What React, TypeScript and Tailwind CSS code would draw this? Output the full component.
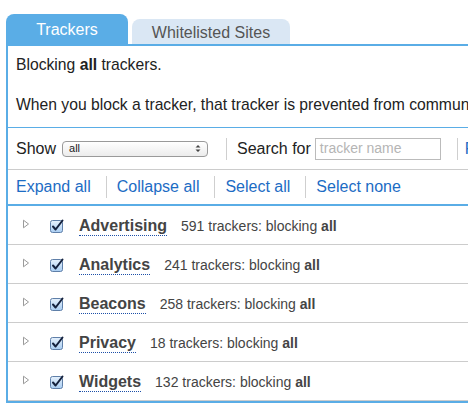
import { ReactNode } from "react";

const CATEGORIES = [
  { name: "Advertising", count: 591 },
  { name: "Analytics", count: 241 },
  { name: "Beacons", count: 258 },
  { name: "Privacy", count: 18 },
  { name: "Widgets", count: 132 },
];

function Triangle() {
  return (
    <svg width="8" height="10" viewBox="0 0 8 10" className="shrink-0">
      <path d="M1.5 1.2 L6.5 5 L1.5 8.8 Z" fill="none" stroke="#9a9a9a" strokeWidth="1" />
    </svg>
  );
}

function Checkbox() {
  return (
    <svg width="14" height="14" viewBox="0 0 14 14" className="shrink-0">
      <defs>
        <linearGradient id="cb" x1="0" y1="0" x2="0" y2="1">
          <stop offset="0" stopColor="#e6f1fc" />
          <stop offset="1" stopColor="#a9cdf2" />
        </linearGradient>
      </defs>
      <rect x="0.5" y="1.5" width="12" height="12" rx="2" fill="url(#cb)" stroke="#5f7fa8" />
      <path d="M3 7.5 L5.6 10.5 L12.5 1.5" fill="none" stroke="#14213d" strokeWidth="2" strokeLinecap="round" strokeLinejoin="round" />
    </svg>
  );
}

function Divider({ className = "" }: { className?: string }) {
  return <span className={`h-[22px] w-px bg-[#cfcfcf] ${className}`} />;
}

function Link({ children }: { children: ReactNode }) {
  return <span className="text-[#1c6cc4]">{children}</span>;
}

export default function App() {
  return (
    <div className="h-[416px] w-[468px] overflow-hidden bg-white font-['Liberation_Sans',Arial,sans-serif] text-[#222]">
      <div className="w-[640px] pl-[6px] pt-[14px]">
        <div className="flex h-[30px] items-end gap-[4px]">
          <div className="flex h-[30px] w-[122px] items-center justify-center rounded-t-[8px] bg-[#5aade6] pt-[2px] text-[16px] text-white">
            Trackers
          </div>
          <div className="flex h-[25px] w-[158px] items-center justify-center rounded-t-[8px] bg-[#dae7f4] pt-[2px] text-[16px] text-[#555]">
            Whitelisted Sites
          </div>
        </div>

        <div className="border-x-2 border-b-2 border-t-2 border-[#5aade6]">
          <div className="border-b border-[#5aade6] px-[8px] pb-[12px] pt-[9px] text-[15.7px] leading-[20px]">
            <p>
              Blocking <b>all</b> trackers.
            </p>
            <p className="mt-[20px] whitespace-nowrap">
              When you block a tracker, that tracker is prevented from communicating with your browser.
            </p>
          </div>

          <div className="flex h-[42px] items-center border-b border-[#cccccc] px-[8px] text-[16px]">
            <span>Show</span>
            <div className="ml-[6px] flex h-[16px] w-[146px] items-center justify-between rounded-[4px] border border-[#9a9a9a] bg-gradient-to-b from-white to-[#ececec] pl-[6px] pr-[6px] text-[11px] leading-none">
              <span>all</span>
              <svg width="6" height="9" viewBox="0 0 6 9">
                <path d="M0.5 3.5 L3 1 L5.5 3.5 Z M0.5 5.5 L3 8 L5.5 5.5 Z" fill="#444" />
              </svg>
            </div>
            <Divider className="ml-[18px] mr-[10px]" />
            <span>Search for</span>
            <div className="ml-[4px] flex h-[22px] w-[126px] items-center border border-[#bbbbbb] px-[4px] text-[14px] text-[#b5b5b5]">
              tracker name
            </div>
            <Divider className="ml-[16px] mr-[7px]" />
            <Link>Reset</Link>
          </div>

          <div className="flex h-[36px] items-center border-b-2 border-[#5aade6] px-[8px] text-[16px]">
            <Link>Expand all</Link>
            <Divider className="ml-[15px] mr-[10px]" />
            <Link>Collapse all</Link>
            <Divider className="ml-[15px] mr-[10px]" />
            <Link>Select all</Link>
            <Divider className="ml-[15px] mr-[10px]" />
            <Link>Select none</Link>
          </div>

          {CATEGORIES.map((c) => (
            <div key={c.name} className="flex h-[39px] items-center border-b border-[#cccccc] pl-[14px] pt-[2px]">
              <div className="-mt-[5px] w-[28px]">
                <Triangle />
              </div>
              <div className="w-[29px]">
                <Checkbox />
              </div>
              <span className="border-b border-dotted border-[#1c4fa8] text-[16px] font-bold leading-[18px] text-[#444]">
                {c.name}
              </span>
              <span className="ml-[14px] text-[14px] text-[#444]">
                {c.count} trackers: blocking <b>all</b>
              </span>
            </div>
          ))}
        </div>
      </div>
    </div>
  );
}
